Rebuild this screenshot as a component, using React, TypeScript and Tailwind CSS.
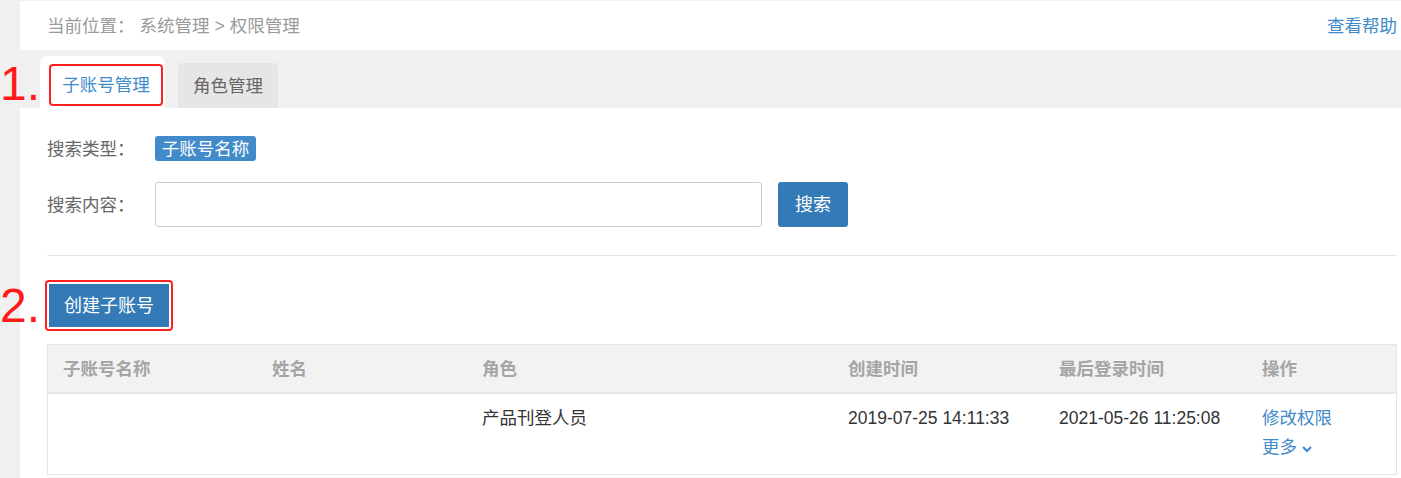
import React from "react";

const font = { fontFamily: '"Liberation Sans", "Noto Sans CJK SC", sans-serif' };

export default function App() {
  const cols = "grid grid-cols-[209px_210px_366px_211px_203px_1fr]";
  return (
    <div
      className="relative flex w-full min-h-[478px] bg-[#f0f0f0] text-[17.5px] leading-[24px]"
      style={font}
    >
      <div className="w-[20px] shrink-0" />
      <div className="flex-1 flex flex-col">
        {/* breadcrumb */}
        <div className="h-[49px] mt-[1px] bg-white flex items-center justify-between pl-[27px] pr-[4px]">
          <div className="text-[#9a9a9a] flex items-center">
            <span>当前位置：</span>
            <span className="ml-[5px]">系统管理</span>
            <span className="mx-[5px]">&gt;</span>
            <span>权限管理</span>
          </div>
          <a className="text-[#428bca]">查看帮助</a>
        </div>

        {/* tabs */}
        <div className="h-[58px] bg-[#f0f0f0] flex items-end pl-[20px] gap-[13px]">
          <div className="w-[125px] h-[52px] bg-white rounded-t-[7px] pl-[9px] pt-[8px]">
            <div className="w-[114px] h-[42px] border-2 border-[#ff2020] rounded-[4px] flex items-center justify-center text-[#428bca]">
              子账号管理
            </div>
          </div>
          <div className="w-[100px] h-[45px] bg-[#e6e6e6] rounded-t-[4px] flex items-center justify-center text-[#666]">
            角色管理
          </div>
        </div>

        {/* content */}
        <div className="bg-white flex-1 pl-[27px] pr-[4px] pb-[4px]">
          <div className="flex items-center mt-[28px] h-[25px]">
            <span className="w-[108px] text-[#666]">搜索类型：</span>
            <span className="h-[25px] w-[101px] bg-[#428bca] text-white rounded-[3px] flex items-center justify-center">
              子账号名称
            </span>
          </div>
          <div className="flex items-center mt-[21px]">
            <span className="w-[108px] text-[#666]">搜索内容：</span>
            <input className="w-[607px] h-[45px] border border-[#ccc] rounded-[3px] outline-none" />
            <button className="ml-[16px] w-[70px] h-[45px] bg-[#337ab7] text-white rounded-[3px] text-[18px]">
              搜索
            </button>
          </div>
          <div className="mt-[28px] h-px bg-[#e5e5e5]" />

          <div className="mt-[24px] ml-[-2px] w-[128px] h-[51px] border-2 border-[#ff2020] rounded-[4px] p-[2px]">
            <button className="w-full h-full bg-[#337ab7] text-white text-[18px]">创建子账号</button>
          </div>

          {/* table */}
          <div className="mt-[13px] border border-[#e5e5e5]">
            <div className={`${cols} h-[49px] items-center bg-[#f2f2f2] border-b-2 border-[#e6e6e6] font-bold text-[#a5a5a5]`}>
              <div className="pl-[15px]">子账号名称</div>
              <div className="pl-[15px]">姓名</div>
              <div className="pl-[15px]">角色</div>
              <div className="pl-[15px]">创建时间</div>
              <div className="pl-[15px]">最后登录时间</div>
              <div className="pl-[15px]">操作</div>
            </div>
            <div className={`${cols} h-[80px] pt-[10px] text-[#333]`}>
              <div className="pl-[15px] leading-[29px]"></div>
              <div className="pl-[15px] leading-[29px]"></div>
              <div className="pl-[15px] leading-[29px]">产品刊登人员</div>
              <div className="pl-[15px] leading-[29px] text-[17.5px]">2019-07-25 14:11:33</div>
              <div className="pl-[15px] leading-[29px] text-[17.5px]">2021-05-26 11:25:08</div>
              <div className="pl-[15px] leading-[29px] text-[#428bca] flex flex-col">
                <span>修改权限</span>
                <span className="flex items-center gap-[4px]">
                  更多
                  <svg width="12" height="12" viewBox="0 0 12 12" fill="none" className="mt-[3px]">
                    <path d="M2 4l4 4 4-4" stroke="#428bca" strokeWidth="2.2" />
                  </svg>
                </span>
              </div>
            </div>
          </div>
        </div>
      </div>

      {/* annotations */}
      <span className="absolute left-[0px] top-[54px] text-[#ff1a1a] text-[48px] leading-[60px]">1.</span>
      <span className="absolute left-[0px] top-[276px] text-[#ff1a1a] text-[48px] leading-[60px]">2.</span>
    </div>
  );
}
